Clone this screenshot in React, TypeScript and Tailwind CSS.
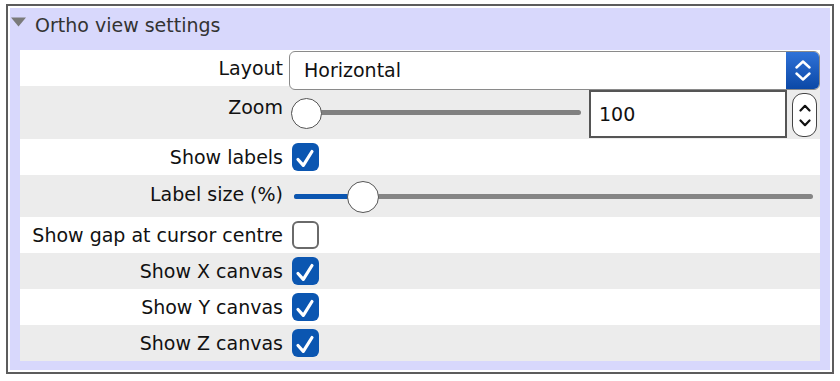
import React from "react";

const font = { fontFamily: '"DejaVu Sans", Verdana, sans-serif' };

function Check({ checked }: { checked: boolean }) {
  if (!checked) {
    return (
      <div className="ml-[3px] w-[27px] h-[28px] rounded-[6px] border-[2px] border-[#6a6a6a] bg-white" />
    );
  }
  return (
    <div className="ml-[3px] w-[27px] h-[28px] rounded-[6px] bg-[#0b56b1] flex items-center justify-center">
      <svg width="27" height="28" viewBox="0 0 27 28">
        <path d="M6 16.5 L11.3 22.3 L20 8.5" fill="none" stroke="white" strokeWidth="3.2" strokeLinecap="round" strokeLinejoin="round" />
      </svg>
    </div>
  );
}

function Label({ children }: { children: React.ReactNode }) {
  return (
    <div className="w-[263px] shrink-0 text-right text-[19px] leading-[24px] text-[#111]">{children}</div>
  );
}

function Row({ children, gray, h, items = "items-center" }: { children: React.ReactNode; gray?: boolean; h: string; items?: string }) {
  return (
    <div className={`flex ${items} ${h} ${gray ? "bg-[#ececec]" : "bg-white"}`}>{children}</div>
  );
}

function CheckRow({ label, checked, gray }: { label: string; checked: boolean; gray?: boolean }) {
  return (
    <Row gray={gray} h="h-[36px]">
      <Label>{label}</Label>
      <div className="ml-[6px]">
        <Check checked={checked} />
      </div>
    </Row>
  );
}

export default function App() {
  return (
    <div className="w-[840px] h-[381px] bg-white pt-[4px] pl-[6px]" style={font}>
      <div className="w-[828px] h-[370px] border-[2px] border-[#5c5c5c] p-[2px] bg-white">
        <div className="w-full h-full bg-[#d8d8fc] flex flex-col">
          <div className="h-[42px] flex items-start pt-[5px]">
            <svg width="15" height="10" viewBox="0 0 15 10" className="ml-[1px] mt-[4px]">
              <path d="M0 0.5 L15 0.5 L7.5 9.5 Z" fill="#7a7a7a" />
            </svg>
            <span className="ml-[9px] text-[19px] leading-[24px] text-[#333]">Ortho view settings</span>
          </div>
          <div className="ml-[10px] w-[800px] h-[311px] flex flex-col">
            <Row h="h-[36px]" items="items-start">
              <div className="h-[36px] flex items-center">
                <Label>Layout</Label>
              </div>
              <div className="relative z-10 ml-[6px] mt-[1px] h-[39px] w-[531px] flex rounded-[6px] border border-[#8a8a8a] bg-white overflow-hidden">
                <div className="flex-1 flex items-center pl-[14px] text-[19px] text-[#111]">Horizontal</div>
                <div className="w-[33px] h-full bg-gradient-to-b from-[#2f72d8] to-[#0a48a6] flex flex-col items-center justify-center gap-[3px]">
                  <svg width="16" height="9" viewBox="0 0 16 9">
                    <path d="M1.5 7.5 L8 1.5 L14.5 7.5" fill="none" stroke="white" strokeWidth="2.4" strokeLinecap="round" strokeLinejoin="round" />
                  </svg>
                  <svg width="16" height="9" viewBox="0 0 16 9">
                    <path d="M1.5 1.5 L8 7.5 L14.5 1.5" fill="none" stroke="white" strokeWidth="2.4" strokeLinecap="round" strokeLinejoin="round" />
                  </svg>
                </div>
              </div>
            </Row>
            <Row gray h="h-[53px]">
              <div className="self-start mt-[9px]">
                <Label>Zoom</Label>
              </div>
              <div className="ml-[8px] relative w-[290px] h-[32px] flex items-center">
                <div className="w-full h-[5px] rounded-full bg-[#808080]" />
                <div className="absolute left-0 top-[1px] w-[31px] h-[31px] rounded-full bg-white border-[1.5px] border-[#555]" />
              </div>
              <div className="ml-[8px] self-start mt-[4px] w-[198px] h-[48px] border-[2px] border-[#555] bg-white flex items-center pl-[8px] text-[19px] text-[#111]">
                100
              </div>
              <div className="ml-[5px] self-start mt-[7px] w-[25px] h-[44px] rounded-[11px] border-[1.5px] border-[#444] bg-white flex flex-col items-center justify-center gap-[7px]">
                <svg width="12" height="8" viewBox="0 0 12 8">
                  <path d="M1.5 6.5 L6 1.8 L10.5 6.5" fill="none" stroke="#111" strokeWidth="2.2" strokeLinecap="round" strokeLinejoin="round" />
                </svg>
                <svg width="12" height="8" viewBox="0 0 12 8">
                  <path d="M1.5 1.5 L6 6.2 L10.5 1.5" fill="none" stroke="#111" strokeWidth="2.2" strokeLinecap="round" strokeLinejoin="round" />
                </svg>
              </div>
            </Row>
            <CheckRow label="Show labels" checked />
            <Row gray h="h-[42px]">
              <div className="self-start mt-[7px]">
                <Label>Label size (%)</Label>
              </div>
              <div className="ml-[11px] relative w-[519px] h-[33px] flex items-center">
                <div className="w-full h-[5px] rounded-full bg-[#858585]" />
                <div className="absolute left-0 w-[70px] h-[5px] rounded-l-full bg-[#0b56b1]" />
                <div className="absolute left-[53px] top-[1px] w-[32px] h-[32px] rounded-full bg-white border-[1.5px] border-[#555]" />
              </div>
            </Row>
            <CheckRow label="Show gap at cursor centre" checked={false} />
            <CheckRow label="Show X canvas" checked gray />
            <CheckRow label="Show Y canvas" checked />
            <CheckRow label="Show Z canvas" checked gray />
          </div>
        </div>
      </div>
    </div>
  );
}
